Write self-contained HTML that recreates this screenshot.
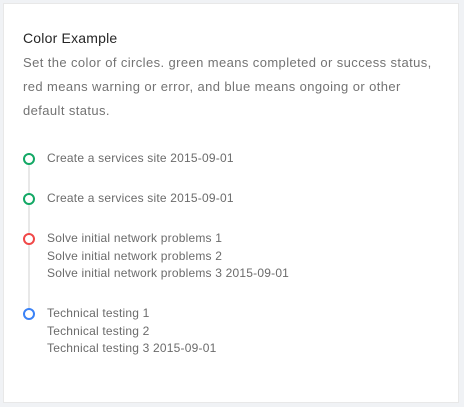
<!DOCTYPE html>
<html><head><style>
html,body{margin:0;padding:0;width:464px;height:407px;background:#f0f2f5;overflow:hidden}
.card{position:absolute;left:3px;top:3px;width:456px;height:400px;background:#fff;box-sizing:border-box;border:1px solid #e8e8e8;font-family:"Liberation Sans",sans-serif}
.t{position:absolute;left:19px;top:24px;font-size:14px;color:#262626;line-height:20px;letter-spacing:0.2px}
.d{position:absolute;left:19px;top:47px;width:416px;font-size:13px;line-height:24px;color:#737373;letter-spacing:0.4px}
.tl{position:absolute;left:19px;top:146px}
.it{position:relative;padding-left:24px;padding-bottom:22.5px;font-size:12px;line-height:17.5px;color:#6b6b6b;letter-spacing:0.2px}
.it .c{position:absolute;left:0;top:3px;width:8px;height:8px;border-radius:50%;border:2px solid;background:#fff;z-index:1}
.it .l{position:absolute;left:5px;top:12px;bottom:-3px;width:2px;background:#e8e8e8}
</style></head><body>
<div class="card">
<div class="t">Color Example</div>
<div class="d">Set the color of circles. green means completed or success status, red means warning or error, and blue means ongoing or other default status.</div>
<div class="tl">
<div class="it"><div class="l"></div><div class="c" style="border-color:#13a865"></div>Create a services site 2015-09-01</div>
<div class="it"><div class="l"></div><div class="c" style="border-color:#13a865"></div>Create a services site 2015-09-01</div>
<div class="it"><div class="l"></div><div class="c" style="border-color:#f04848"></div>Solve initial network problems 1<br>Solve initial network problems 2<br>Solve initial network problems 3 2015-09-01</div>
<div class="it"><div class="c" style="border-color:#3b82f6"></div>Technical testing 1<br>Technical testing 2<br>Technical testing 3 2015-09-01</div>
</div>
</div>
</body></html>
